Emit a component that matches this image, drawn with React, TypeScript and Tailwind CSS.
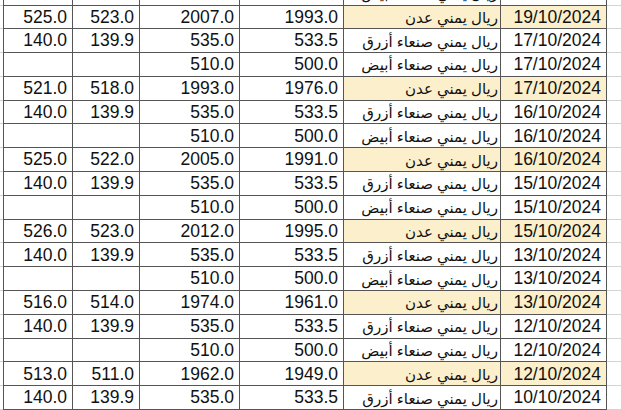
import React from "react";

type Row = { a: string; b: string; c: string; d: string; name: string; date: string; hl?: boolean };

const AZ = "ريال يمني صنعاء أزرق";
const AB = "ريال يمني صنعاء أبيض";
const AD = "ريال يمني عدن";

const rows: Row[] = [
  { a: "", b: "", c: "510.0", d: "500.0", name: AB, date: "19/10/2024" },
  { a: "525.0", b: "523.0", c: "2007.0", d: "1993.0", name: AD, date: "19/10/2024", hl: true },
  { a: "140.0", b: "139.9", c: "535.0", d: "533.5", name: AZ, date: "17/10/2024" },
  { a: "", b: "", c: "510.0", d: "500.0", name: AB, date: "17/10/2024" },
  { a: "521.0", b: "518.0", c: "1993.0", d: "1976.0", name: AD, date: "17/10/2024", hl: true },
  { a: "140.0", b: "139.9", c: "535.0", d: "533.5", name: AZ, date: "16/10/2024" },
  { a: "", b: "", c: "510.0", d: "500.0", name: AB, date: "16/10/2024" },
  { a: "525.0", b: "522.0", c: "2005.0", d: "1991.0", name: AD, date: "16/10/2024", hl: true },
  { a: "140.0", b: "139.9", c: "535.0", d: "533.5", name: AZ, date: "15/10/2024" },
  { a: "", b: "", c: "510.0", d: "500.0", name: AB, date: "15/10/2024" },
  { a: "526.0", b: "523.0", c: "2012.0", d: "1995.0", name: AD, date: "15/10/2024", hl: true },
  { a: "140.0", b: "139.9", c: "535.0", d: "533.5", name: AZ, date: "13/10/2024" },
  { a: "", b: "", c: "510.0", d: "500.0", name: AB, date: "13/10/2024" },
  { a: "516.0", b: "514.0", c: "1974.0", d: "1961.0", name: AD, date: "13/10/2024", hl: true },
  { a: "140.0", b: "139.9", c: "535.0", d: "533.5", name: AZ, date: "12/10/2024" },
  { a: "", b: "", c: "510.0", d: "500.0", name: AB, date: "12/10/2024" },
  { a: "513.0", b: "511.0", c: "1962.0", d: "1949.0", name: AD, date: "12/10/2024", hl: true },
  { a: "140.0", b: "139.9", c: "535.0", d: "533.5", name: AZ, date: "10/10/2024" },
];

export default function App() {
  return (
    <div
      className="w-[621px] h-[410px] overflow-hidden bg-white text-[#111]"
      style={{ fontFamily: '"Liberation Sans", "DejaVu Sans", Arial, sans-serif' }}
    >
      <div className="mt-[-18.3px] flex flex-col">
        {rows.map((r, i) => (
          <div key={i} className="flex h-[23.8px]">
            <div className="w-[3px] border-b border-[#d4d4d4]" />
            <div className="w-[70px] border-l border-r border-b border-[#555] flex items-center justify-end pr-[5px] pt-[1px] text-[17.5px] leading-none">
              {r.a}
            </div>
            <div className="w-[67px] border-r border-b border-[#555] flex items-center justify-end pr-[5px] pt-[1px] text-[17.5px] leading-none">
              {r.b}
            </div>
            <div className="w-[100px] border-r border-b border-[#555] flex items-center justify-end pr-[5px] pt-[1px] text-[17.5px] leading-none">
              {r.c}
            </div>
            <div className="w-[104px] border-r border-b border-[#555] flex items-center justify-end pr-[5px] pt-[1px] text-[17.5px] leading-none">
              {r.d}
            </div>
            <div
              className={`w-[157px] border-r border-b border-[#555] flex items-center justify-end pr-[2px] pt-[1px] text-[15px] leading-none ${r.hl ? "bg-[#fcefcb]" : ""}`}
              dir="rtl"
              style={{ justifyContent: "flex-start" }}
            >
              {r.name}
            </div>
            <div
              className={`w-[106px] border-r border-b border-[#555] flex items-center justify-end pr-[5px] pt-[1px] text-[17.5px] leading-none ${r.hl ? "bg-[#fcefcb]" : ""}`}
            >
              {r.date}
            </div>
            <div className="flex-1 border-b border-[#d4d4d4]" />
          </div>
        ))}
      </div>
    </div>
  );
}
